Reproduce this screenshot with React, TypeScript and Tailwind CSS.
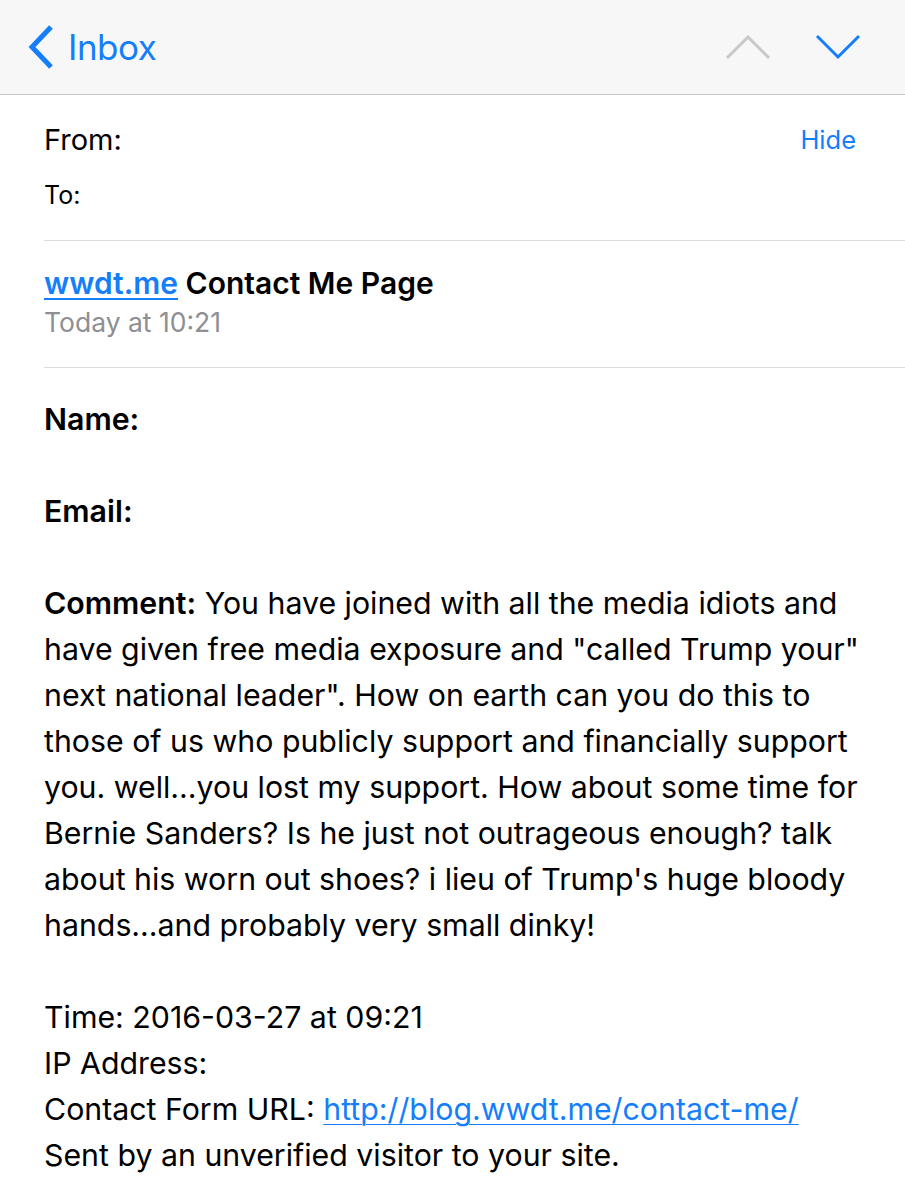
export default function App() {
  const font = { fontFamily: 'Inter, "Noto Sans", sans-serif' };
  const lines = [
    'have given free media exposure and "called Trump your"',
    'next national leader". How on earth can you do this to',
    'those of us who publicly support and financially support',
    'you. well...you lost my support. How about some time for',
    'Bernie Sanders? Is he just not outrageous enough? talk',
    "about his worn out shoes? i lieu of Trump's huge bloody",
    'hands...and probably very small dinky!',
  ];
  return (
    <div className="w-[905px] h-[1200px] bg-white overflow-hidden text-black" style={font}>
      <div className="h-[95px] bg-[#f7f7f7] border-b border-[#c4c4c8] flex items-center pl-[27px] pr-[44px]">
        <svg width="28" height="46" viewBox="0 0 28 46" className="mr-[13px]">
          <path d="M24 3 L5 23 L24 43" fill="none" stroke="#157efb" strokeWidth="5" />
        </svg>
        <span className="text-[35px] text-[#157efb] tracking-[-0.5px] leading-none">Inbox</span>
        <div className="flex-1" />
        <svg width="46" height="26" viewBox="0 0 46 26" className="mr-[44px]">
          <path d="M2 24 L23 3 L44 24" fill="none" stroke="#c7c7cc" strokeWidth="3" />
        </svg>
        <svg width="46" height="26" viewBox="0 0 46 26">
          <path d="M2 2 L23 23 L44 2" fill="none" stroke="#157efb" strokeWidth="3" />
        </svg>
      </div>
      <div className="pl-[44px]">
        <div className="pr-[49px] pt-[23px] pb-[24px] border-b border-[#dcdcdc]">
          <div className="flex items-center justify-between h-[44px]">
            <span className="text-[29px]">From:</span>
            <span className="text-[25.5px] text-[#157efb]">Hide</span>
          </div>
          <div className="h-[40px] mt-[14px] flex items-center text-[25px]">To:</div>
        </div>
        <div className="pt-[22px] pb-[26px] border-b border-[#dcdcdc]">
          <div className="text-[30px] font-semibold leading-[40px] whitespace-nowrap">
            <span className="text-[#157efb] underline decoration-2 underline-offset-[4px]">wwdt.me</span> Contact Me Page
          </div>
          <div className="text-[26.5px] text-[#8e8e93] leading-[38px]">Today at 10:21</div>
        </div>
        <div className="pt-[28px] text-[30.3px] leading-[46px] whitespace-nowrap">
          <div className="font-semibold">Name:</div>
          <div className="h-[46px]" />
          <div className="font-semibold">Email:</div>
          <div className="h-[46px]" />
          <p>
            <span className="font-semibold">Comment:</span> You have joined with all the media idiots and
            {lines.map((l, i) => (
              <span key={i}>
                <br />
                {l}
              </span>
            ))}
          </p>
          <div className="h-[46px]" />
          <div>Time: 2016-03-27 at 09:21</div>
          <div>IP Address:</div>
          <div>
            Contact Form URL: <span className="text-[#157efb] underline decoration-1 underline-offset-[4px]">http://blog.wwdt.me/contact-me/</span>
          </div>
          <div>Sent by an unverified visitor to your site.</div>
        </div>
      </div>
    </div>
  );
}
